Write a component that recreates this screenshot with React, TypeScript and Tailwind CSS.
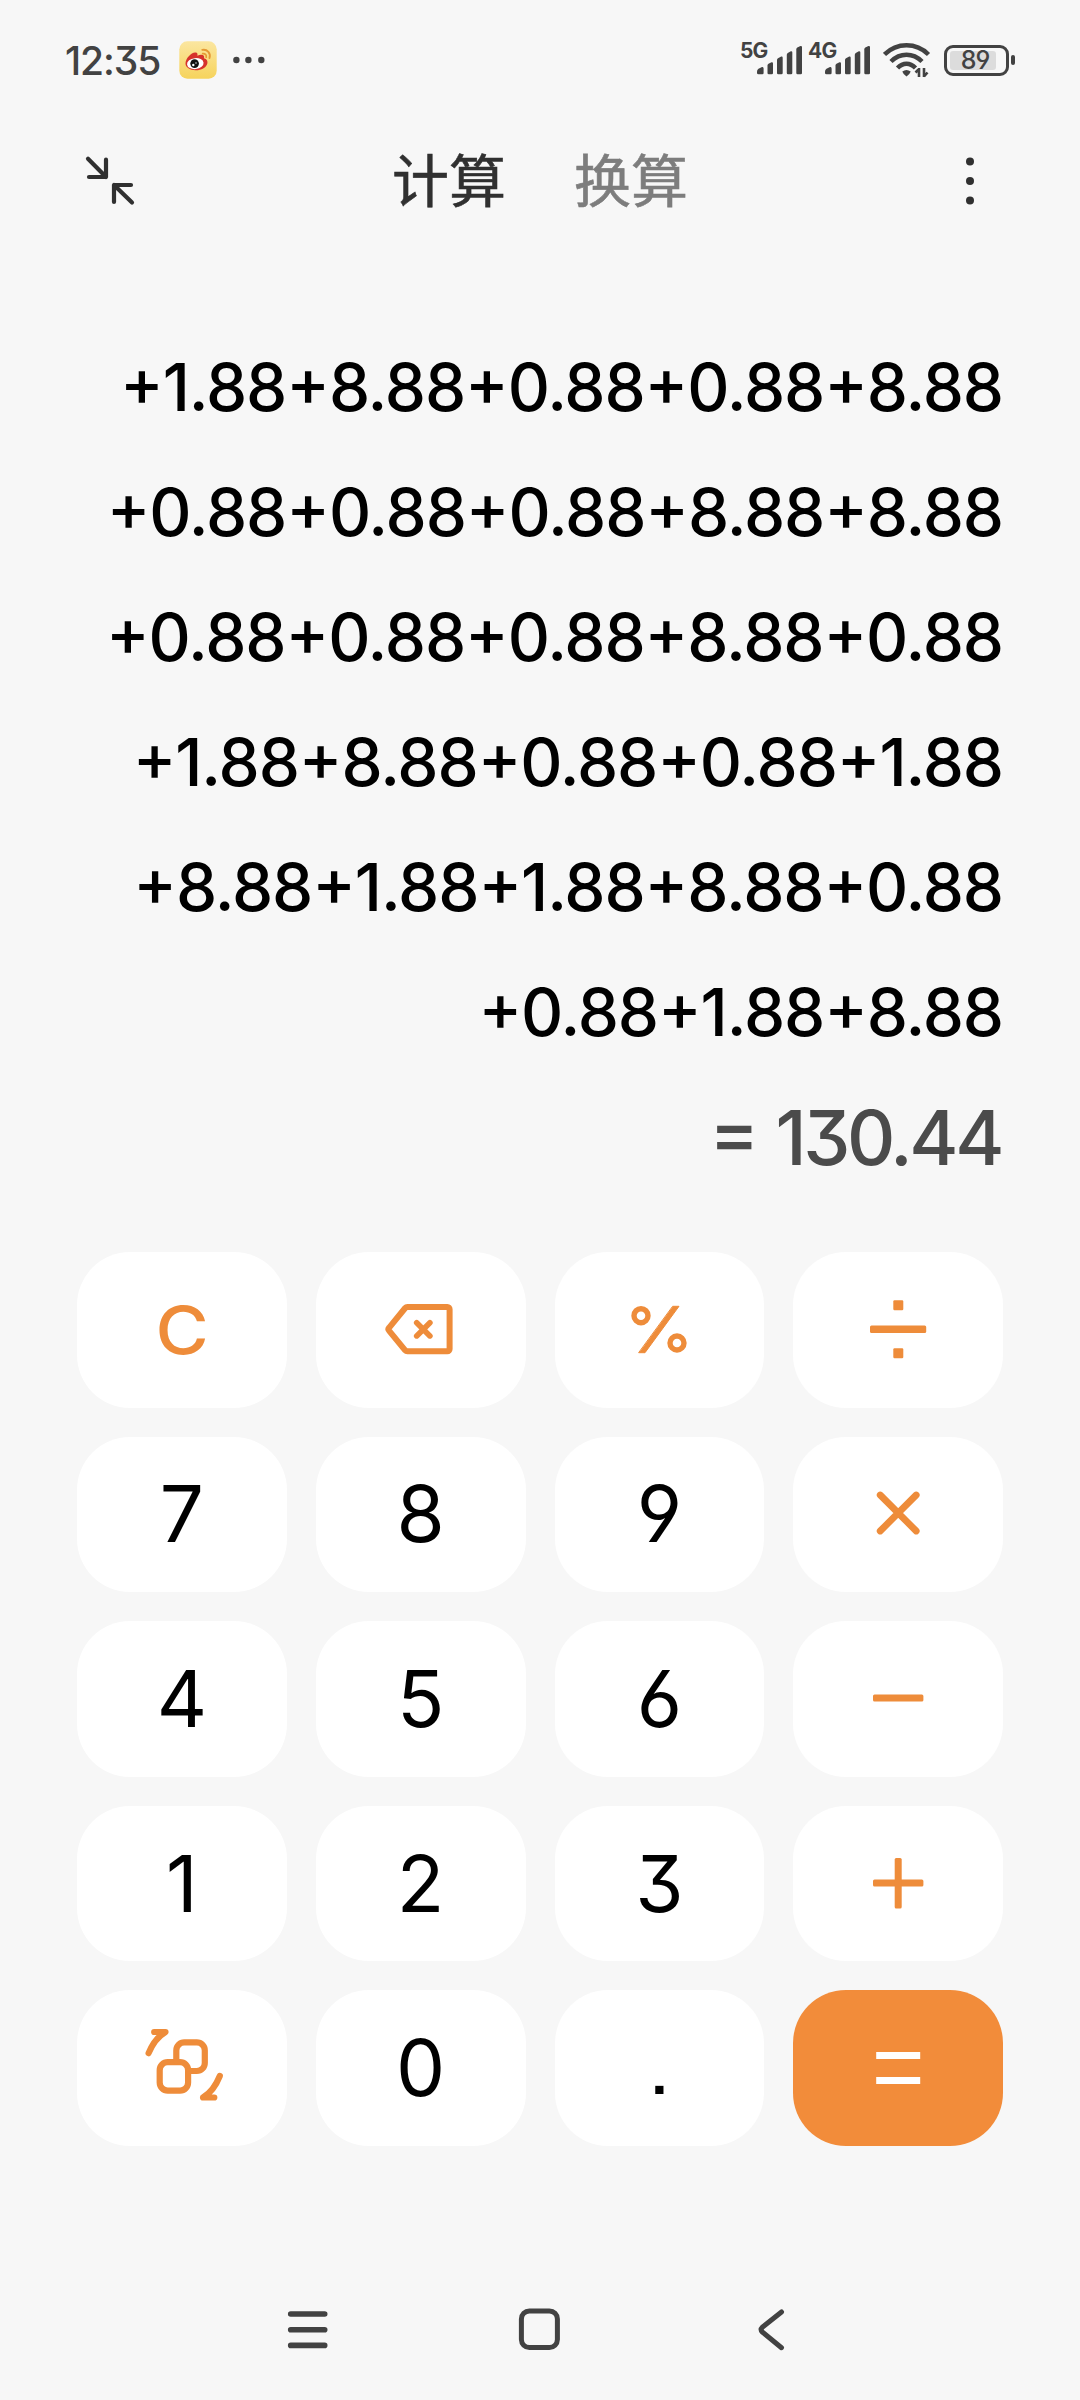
import type { ReactNode } from "react";

const LINES = [
  "+1.88+8.88+0.88+0.88+8.88",
  "+0.88+0.88+0.88+8.88+8.88",
  "+0.88+0.88+0.88+8.88+0.88",
  "+1.88+8.88+0.88+0.88+1.88",
  "+8.88+1.88+1.88+8.88+0.88",
  "+0.88+1.88+8.88",
];

type Key = { label: string; icon?: ReactNode; className?: string };

function KeyIcon({ children }: { children: ReactNode }) {
  return (
    <svg viewBox="0 0 100 100" className="size-[100px]" fill="none" stroke="currentColor" strokeLinecap="round" strokeLinejoin="round" aria-hidden="true">
      {children}
    </svg>
  );
}

const backspace = (
  <KeyIcon>
    <path d="M36.5 27H76.4a2.2 2.2 0 0 1 2.2 2.2V69.1a2.2 2.2 0 0 1-2.2 2.2H36.5a3 3 0 0 1-2.3-1L18 50.6a2 2 0 0 1 0-2.7L34.2 28a3 3 0 0 1 2.3-1Z" strokeWidth="6" />
    <path d="M45.7 42.7l13.2 13.2M58.9 42.7L45.7 55.9" strokeWidth="5.6" />
  </KeyIcon>
);

const percent = (
  <KeyIcon>
    <circle cx="32" cy="35.7" r="7" strokeWidth="5.4" />
    <circle cx="68" cy="63" r="7" strokeWidth="5.4" />
    <path d="M64 26.3h6L36 72.7h-6Z" fill="currentColor" strokeWidth="1" />
  </KeyIcon>
);

const divide = (
  <KeyIcon>
    <g fill="currentColor" stroke="none">
      <rect x="22" y="45.5" width="56.2" height="7.5" rx="1.5" />
      <rect x="45.3" y="20.2" width="10" height="10" rx="1.2" />
      <rect x="45.3" y="68.3" width="10" height="10" rx="1.2" />
    </g>
  </KeyIcon>
);

const multiply = (
  <KeyIcon>
    <path d="M32.2 31l36 36M68.2 31l-36 36" strokeWidth="6.8" />
  </KeyIcon>
);

const minus = (
  <KeyIcon>
    <rect x="25" y="45.6" width="50.4" height="7" rx="1.5" fill="currentColor" stroke="none" />
  </KeyIcon>
);

const plus = (
  <KeyIcon>
    <g fill="currentColor" stroke="none">
      <rect x="25" y="45.6" width="50.4" height="7" rx="1.5" />
      <rect x="46.7" y="24" width="7" height="50.4" rx="1.5" />
    </g>
  </KeyIcon>
);

const convert = (
  <KeyIcon>
    <g strokeWidth="6.2">
      <rect x="27.7" y="44.2" width="28.4" height="28.4" rx="8" />
      <path d="M44.3 43V32.4a8 8 0 0 1 8-8H64.8a8 8 0 0 1 8 8V45a8 8 0 0 1-8 8H57.5" />
      <path d="M22.2 14H33.5C25 19 20.5 25.5 16.6 35.2" />
      <path d="M82.3 79.5H71C79.5 74.5 84 67.5 87.8 58" />
    </g>
  </KeyIcon>
);

const equals = (
  <KeyIcon>
    <g fill="currentColor" stroke="none">
      <rect x="28.2" y="34" width="44" height="7" />
      <rect x="28.2" y="59" width="44" height="7" />
    </g>
  </KeyIcon>
);

const KEYS: Key[] = [
  { label: "C", className: "text-[#ee8c3a] font-medium text-[66px]" },
  { label: "Backspace", icon: backspace },
  { label: "Percent", icon: percent },
  { label: "Divide", icon: divide },
  { label: "7" },
  { label: "8" },
  { label: "9" },
  { label: "Multiply", icon: multiply },
  { label: "4" },
  { label: "5" },
  { label: "6" },
  { label: "Minus", icon: minus },
  { label: "1" },
  { label: "2" },
  { label: "3" },
  { label: "Plus", icon: plus },
  { label: "Convert", icon: convert },
  { label: "0" },
  { label: ".", className: "text-[72px] text-black [font-feature-settings:'ss07']" },
  { label: "Equals", icon: equals, className: "bg-[#f28c3a] text-white" },
];

function Signal() {
  return (
    <svg viewBox="0 0 46 30" className="w-[46px] h-[30px]" fill="#424242" aria-hidden="true">
      <path d="M0 26.5Q0 24.8 1.5 23.8L5 22Q6.6 21.5 6.6 23.5V28Q6.6 29.3 5.3 29.3H1.5Q0 29.3 0 28Z" />
      <path d="M10.5 20.5Q10.5 19.3 11.5 18.7L14.5 17.3Q16 17 16 18.5V28Q16 29.3 14.7 29.3H11.8Q10.5 29.3 10.5 28Z" />
      <path d="M20 15Q20 13.9 21 13.2L24.2 11.6Q25.7 11.2 25.7 12.8V28Q25.7 29.3 24.4 29.3H21.3Q20 29.3 20 28Z" />
      <path d="M29.8 9.8Q29.8 8.5 30.8 7.9L33.8 6.3Q35.3 6 35.3 7.5V28Q35.3 29.3 34 29.3H31.1Q29.8 29.3 29.8 28Z" />
      <path d="M39.3 4.5Q39.3 3.2 40.3 2.6L43.5 1Q45 .7 45 2.2V28Q45 29.3 43.7 29.3H40.6Q39.3 29.3 39.3 28Z" />
    </svg>
  );
}

function WeiboIcon() {
  return (
    <svg viewBox="0 0 38 38" className="size-[38px]" aria-hidden="true">
      <defs>
        <linearGradient id="wb" x1="0" y1="0" x2="0" y2="1">
          <stop offset="0" stopColor="#fbe6a0" />
          <stop offset="1" stopColor="#f6d35c" />
        </linearGradient>
      </defs>
      <rect x=".3" y=".3" width="37.4" height="37.4" rx="8" fill="url(#wb)" />
      <path d="M6.5 22.5C6.5 17 13 10.5 17 11.5C19 12 18.5 14 18.3 14.8C22 13 26 13.5 25 17.3C28 18.2 28.8 20 28.4 22.3C27.5 27 21.5 29.5 16.5 29.3C11 29 6.5 26.5 6.5 22.5Z" fill="#d6322c" />
      <ellipse cx="16.3" cy="22.6" rx="8.3" ry="5.5" transform="rotate(-6 16.3 22.6)" fill="#fff" />
      <circle cx="15.6" cy="22.6" r="4.3" fill="#111" />
      <circle cx="14.3" cy="24" r="1.2" fill="#fff" />
      <circle cx="17" cy="22" r=".7" fill="#fff" />
      <path d="M23.7 12.7C26 12.3 27.7 14 27.2 16.2" fill="none" stroke="#e59a35" strokeWidth="1.7" strokeLinecap="round" />
      <path d="M23.3 8.9C28.3 8 32 12.2 30.5 17" fill="none" stroke="#e59a35" strokeWidth="1.9" strokeLinecap="round" />
    </svg>
  );
}

function StatusBar() {
  return (
    <div className="flex h-[120px] items-center pl-[65px] pr-[65px] text-[#424242]">
      <span className="w-[114px] text-[39px] leading-none font-medium tracking-[-1.1px]">12:35</span>
      <WeiboIcon />
      <svg viewBox="0 0 32 8" className="ml-4 h-2 w-8" fill="currentColor" aria-hidden="true">
        <circle cx="3.4" cy="4" r="3.2" />
        <circle cx="15.4" cy="4" r="3.2" />
        <circle cx="28.3" cy="4" r="3.2" />
      </svg>
      <div className="ml-auto flex items-center">
        <span className="-mt-[20px] w-[17px] text-[21px] leading-none font-bold tracking-[-0.8px]">5G</span>
        <Signal />
        <span className="-mt-[20px] ml-[5px] w-[17px] text-[21px] leading-none font-bold tracking-[-0.8px]">4G</span>
        <Signal />
        <svg viewBox="0 0 48 36" className="ml-3 h-9 w-12" fill="none" stroke="currentColor" strokeWidth="4.5" aria-hidden="true">
          <path d="M1.5 12.5C14 .3 33 .3 45.5 12.5" />
          <path d="M8 19.5C17 10.5 30 10.5 39 19.5" />
          <path d="M14.5 26C20 20.2 27 20.2 32.5 26" />
          <path d="M19.3 29.5Q23.5 26.5 27.7 29.5Q27 32 23.5 34.5Q20 32 19.3 29.5Z" fill="currentColor" stroke="none" />
          <path d="M36 26V35M32.5 30.5L36 27M41 35V26M41 34.5L44.5 30.5" strokeWidth="2.6" />
        </svg>
        <div className="ml-[13px] flex h-[31px] w-[65px] items-center rounded-[9px] border-[3px] border-[#424242] p-[3px]">
          <div className="flex h-full w-[46px] items-center justify-center rounded-[3px] bg-[#dcdcdc]">
            <span className="ml-[4px] text-[25px] leading-none font-[450] tracking-[-1px]">89</span>
          </div>
        </div>
        <div className="ml-[2px] h-[10px] w-1 rounded-[2px] bg-[#424242]" />
      </div>
    </div>
  );
}

export default function App() {
  return (
    <main className="flex h-[2400px] w-[1080px] flex-col overflow-hidden bg-[#f7f7f7] font-['Inter','Noto_Sans_CJK_SC',sans-serif] [font-feature-settings:'cv03','cv04','cv09']">
      <StatusBar />

      <header className="flex h-[122px] items-center pl-[84px] pr-[104px] text-[#303030]">
        <svg viewBox="0 0 52 52" className="size-[52px]" fill="none" stroke="currentColor" strokeWidth="4.2" strokeLinecap="round" strokeLinejoin="round" aria-hidden="true">
          <path d="M4 3.7L22 22M22 4.7V22H5" />
          <path d="M48 47.6L30 30M30 47V30H47" />
        </svg>
        <nav className="-mt-[7px] ml-[256px] flex gap-[68px] font-['Noto_Sans_CJK_SC',sans-serif] text-[57px] leading-none [-webkit-text-stroke:0.6px_currentColor]">
          <span>计算</span>
          <span className="text-[#7d7d7d]">换算</span>
        </nav>
        <svg viewBox="0 0 12 52" className="ml-auto h-[52px] w-3" fill="currentColor" aria-hidden="true">
          <circle cx="6" cy="6.5" r="4" />
          <circle cx="6" cy="26" r="4" />
          <circle cx="6" cy="45.5" r="4" />
        </svg>
      </header>

      <section className="mt-[83px] pr-[77px] text-right [font-feature-settings:'cv03','cv04','cv09','case']">
        {LINES.map((line, i) => (
          <p key={i} className="text-[65.5px] leading-[125px] font-[450] tracking-[-1.08px] text-black">{line}</p>
        ))}
        <p className="pr-[2px] text-[75px] leading-[125px] font-[450] tracking-[-3.4px] text-[#4b4b4b] [word-spacing:3px]">= 130.44</p>
      </section>

      <section className="mt-[52px] grid h-[894px] grid-cols-4 grid-rows-5 gap-[29px] px-[77px]">
        {KEYS.map((k) => (
          <button
            key={k.label}
            aria-label={k.label}
            className={`flex items-center justify-center rounded-[53px] leading-none ${k.className ?? (k.icon ? "bg-white text-[#ee8c3a]" : "text-[78px] text-black")} ${k.icon ? "" : "bg-white"}`}
          >
            {k.icon ?? <span className={k.label === "C" ? "scale-x-110" : ""}>{k.label}</span>}
          </button>
        ))}
      </section>

      <footer className="mt-[153px] flex h-[60px] items-center justify-between pl-[283px] pr-[281px] text-[#424242]">
        <svg viewBox="0 0 50 60" className="h-[60px] w-[50px]" fill="none" stroke="currentColor" strokeWidth="5.6" strokeLinecap="round" aria-hidden="true">
          <path d="M7.7 15H41.7M7.7 30.7H41.7M7.7 46.4H41.7" />
        </svg>
        <svg viewBox="0 0 50 60" className="h-[60px] w-[50px]" fill="none" stroke="currentColor" strokeWidth="5" aria-hidden="true">
          <rect x="5.4" y="12" width="36" height="36.5" rx="8" />
        </svg>
        <svg viewBox="0 0 50 60" className="h-[60px] w-[50px]" fill="none" stroke="currentColor" strokeWidth="5" strokeLinecap="round" strokeLinejoin="round" aria-hidden="true">
          <path d="M32.5 13L13.3 28.2Q11 30.5 13.3 33L32.500 48.700" />
        </svg>
      </footer>
    </main>
  );
}
